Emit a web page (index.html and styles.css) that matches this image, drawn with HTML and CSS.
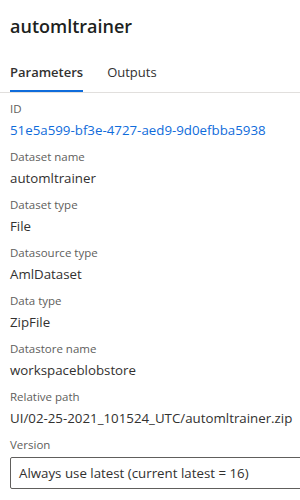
FILE: index.html
```html
<!DOCTYPE html>
<html lang="en">
<head>
    <meta charset="UTF-8">
    <title>automltrainer</title>
    <link rel="stylesheet" href="styles.css">
</head>
<body>
    <div class="panel">
        <h1>automltrainer</h1>
        <div class="tabs">
            <div class="tab active">Parameters</div>
            <div class="tab">Outputs</div>
        </div>
        <div class="fields">
            <div class="field">
                <div class="label">ID</div>
                <div class="value link">51e5a599-bf3e-4727-aed9-9d0efbba5938</div>
            </div>
            <div class="field">
                <div class="label">Dataset name</div>
                <div class="value">automltrainer</div>
            </div>
            <div class="field">
                <div class="label">Dataset type</div>
                <div class="value">File</div>
            </div>
            <div class="field">
                <div class="label">Datasource type</div>
                <div class="value">AmlDataset</div>
            </div>
            <div class="field">
                <div class="label">Data type</div>
                <div class="value">ZipFile</div>
            </div>
            <div class="field">
                <div class="label">Datastore name</div>
                <div class="value">workspaceblobstore</div>
            </div>
            <div class="field">
                <div class="label">Relative path</div>
                <div class="value">UI/02-25-2021_101524_UTC/automltrainer.zip</div>
            </div>
            <div class="field">
                <div class="label">Version</div>
                <div class="dropdown">Always use latest (current latest = 16)</div>
            </div>
        </div>
    </div>
</body>
</html>
```

FILE: styles.css
```css
body {
    margin: 0;
    font-family: "Open Sans", "Noto Sans", sans-serif;
    color: #323130;
    background: #fff;
    overflow: hidden;
}
.panel {
    width: 330px;
}
h1 {
    margin: 0;
    padding: 12px 10px 0;
    font-size: 18px;
    font-weight: 600;
    line-height: 28px;
    color: #201f1e;
}
.tabs {
    display: flex;
    gap: 24px;
    margin-top: 22px;
    padding: 0 10px;
    border-bottom: 1px solid #e1dfdd;
}
.tab {
    font-size: 13px;
    line-height: 20px;
    padding-bottom: 8px;
    border-bottom: 2px solid transparent;
}
.tab.active {
    font-weight: 600;
    border-bottom-color: #0f6cdb;
}
.fields {
    padding: 6px 10px 0;
}
.field {
    margin-bottom: 6px;
}
.label {
    font-size: 11.5px;
    line-height: 20px;
    color: #605e5c;
}
.value {
    font-size: 13.3px;
    line-height: 22px;
    white-space: nowrap;
}
.link {
    color: #0f6cdb;
}
.dropdown {
    margin-top: 2px;
    height: 30px;
    line-height: 30px;
    border: 1px solid #605e5c;
    border-radius: 2px;
    padding: 0 8px;
    font-size: 13.3px;
    white-space: nowrap;
}
```
